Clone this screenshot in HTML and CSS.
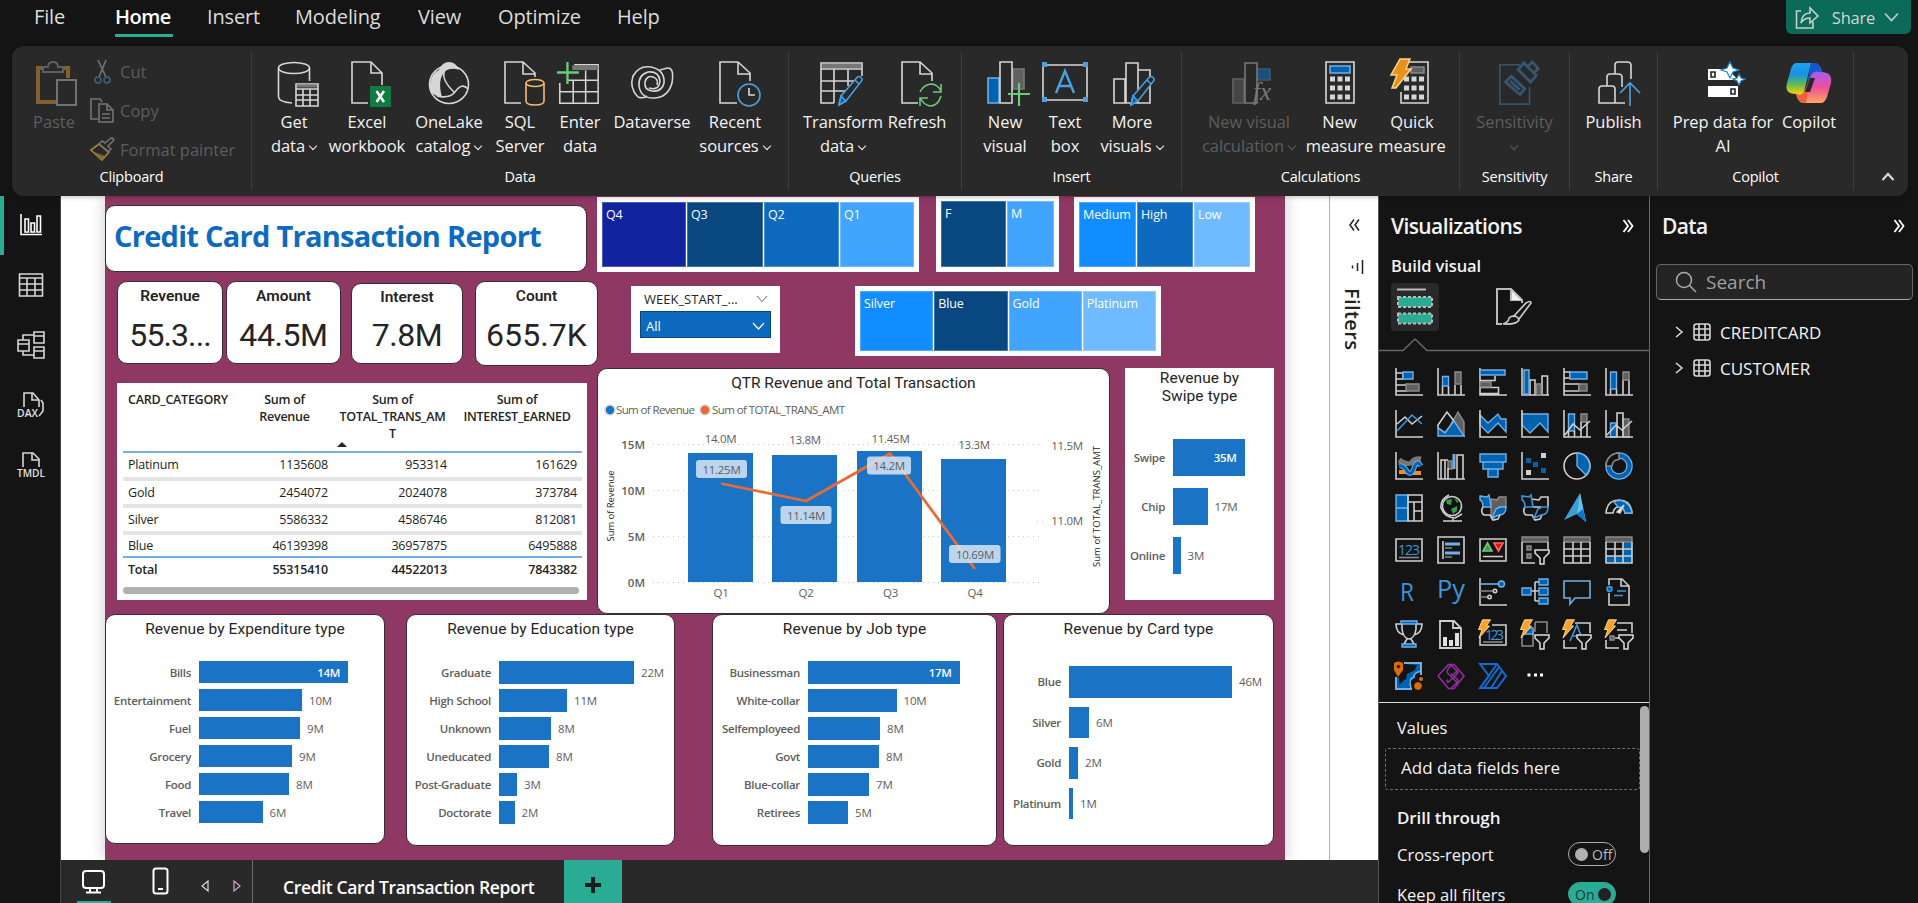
FILE: index.html
```html
<!DOCTYPE html>
<html lang="en">
<head>
<meta charset="utf-8">
<title>Credit Card Transaction Report</title>
<link rel="stylesheet" href="styles.css">
</head>
<body>
<svg class="defs" width="0" height="0">
  <defs>
    <symbol id="bolt" viewBox="0 0 14 20"><path d="M5 .8H13L9 7H12L1.500 19L4.500 10.500H1Z" fill="#f7a32b" stroke="#fbd58a" stroke-width="1"/></symbol>
    <symbol id="pencil" viewBox="0 0 26 32"><path d="M2 30L4 21L20 2.500Q22 .5 24 2.500T24.500 6L9 26Z" fill="#292929" stroke="#4ba0e1"/><path d="M2 30L4 21L9 26Z" fill="#0063b1" stroke="#4ba0e1"/><path d="M18 5L22 9" stroke="#4ba0e1"/></symbol>
    <symbol id="funnel" viewBox="0 0 16 16"><path d="M1 1H15V4L10 9V15H6V9L1 4Z" fill="#141414" stroke="#e0e0e0" stroke-width="1.500"/></symbol>
    <linearGradient id="cpA" x1="0" y1="0" x2="0" y2="1"><stop offset="0" stop-color="#1fa2f0"/><stop offset=".35" stop-color="#1592e6"/><stop offset=".65" stop-color="#5cb85c"/><stop offset="1" stop-color="#ffd400"/></linearGradient>
    <linearGradient id="cpB" x1="0" y1="0" x2="0" y2="1"><stop offset="0" stop-color="#a45cf0"/><stop offset=".5" stop-color="#ee4f9c"/><stop offset="1" stop-color="#ffa85c"/></linearGradient>
  </defs>
</svg>

<nav class="tabs">
  <span class="t-file">File</span><span class="t-home">Home</span><span class="t-insert">Insert</span><span class="t-model">Modeling</span><span class="t-view">View</span><span class="t-opt">Optimize</span><span class="t-help">Help</span>
  <button class="share"><svg width="24" height="26" viewBox="0 0 24 26"><path d="M6 7H1.500V24H18V18M6 19Q7 9 15 9V4L23 12L15 19V14Q9 14 6 19Z"/></svg><b>Share</b><svg width="15" height="10" viewBox="0 0 15 10"><path d="M1 1.500L7.500 8.500L14 1.500"/></svg></button>
</nav>

<section class="ribbon">
  <div class="group clipboard">
    <div class="clip">
      <div class="item off"><svg width="42" height="46" viewBox="0 0 42 46"><path d="M6 7H2V41H20M27 7H32V17" stroke="#80602f" stroke-width="4"/><path d="M7 11V6H12Q12 1 17 1T22 6H27V11Z" stroke="#5f5f5f" stroke-width="2"/><path d="M21 19H40V44H21Z" stroke="#717171" stroke-width="2"/></svg><span>Paste</span></div>
      <div class="clip-list">
        <div><svg width="25" height="25" viewBox="0 0 25 25"><path d="M8 1L16 18M16 1L9 18"/><circle cx="8" cy="21" r="3" stroke="#3f6078"/><circle cx="17" cy="21" r="3" stroke="#3f6078"/></svg>Cut</div>
        <div><svg width="25" height="25" viewBox="0 0 25 25"><path d="M8 21H1V1H10L12 4M9 24V6H17L23 12V24ZM17 6V12H23M12 16H20M12 20H20"/></svg>Copy</div>
        <div><svg width="25" height="25" viewBox="0 0 25 25"><path d="M1 13L9 7L19 15L12 23Z" stroke="#a3833f"/><path d="M4 15L15 19L12 23Z" fill="#8a672f" stroke="none"/><path d="M9 7L12 4L15 6L21 1Q25 1 23 4L18 9L21 12L18 15Z"/></svg>Format painter</div>
      </div>
    </div>
    <h4>Clipboard</h4>
  </div>
  <div class="group data">
    <div class="items">
      <div class="item"><svg class="nudge" width="42" height="46" viewBox="0 0 42 46"><ellipse cx="17" cy="7" rx="15.500" ry="5.500"/><path d="M1.500 7V36Q2 41 15 42M32.500 7V20"/><path d="M19 23H41V45H19Z"/><path d="M20 25H40" stroke="#777" stroke-width="3"/><path d="M19 28H41M19 34H41M19 39H41M26 28V45M33 28V45"/></svg><span>Get<br>data<i class="chev"></i></span></div>
      <div class="item"><svg class="nudge" width="42" height="46" viewBox="0 0 42 46"><path d="M18 42H2V1H21L32 12V24M21 1V12H32"/><path d="M20 25H41V46H20Z" fill="#107c41" stroke="none"/><path d="M26.500 30L34 41M34 30L26.500 41" stroke="#fff" stroke-width="2.500"/></svg><span>Excel<br>workbook</span></div>
      <div class="item"><svg width="42" height="46" viewBox="0 0 42 46"><ellipse cx="21" cy="23.500" rx="19.500" ry="19"/><path d="M11 9Q14 1 21 1T31 9Q24 6 17 10Q9 19 14 36Q-1 34 2 22Q4 12 11 9Z" fill="#d6d6d6" stroke="none"/><path d="M17 9Q12 18 27 32M9 35Q21 38 27 31Q34 21 40 28"/></svg><span>OneLake<br>catalog<i class="chev"></i></span></div>
      <div class="item"><svg class="nudge" width="42" height="46" viewBox="0 0 42 46"><path d="M18 42H2V1H20L32 12V16M20 1V13H32"/><ellipse cx="32" cy="22" rx="9" ry="3.500" stroke="#f5b971"/><path d="M23 22V40Q23 44 32 44T41 40V22" stroke="#f5b971"/></svg><span>SQL<br>Server</span></div>
      <div class="item"><svg class="grid-ic" width="46" height="48" viewBox="0 0 46 48"><path d="M19 4H44V44H4V23M4 32H44M12 20H44M18 20V44M31 10V44"/><path d="M17 7H44" stroke="#777" stroke-width="5"/><path d="M1 12H24M12 1V24" stroke="#6ccb7a" stroke-width="2.400"/></svg><span>Enter<br>data</span></div>
      <div class="item"><svg width="44" height="46" viewBox="0 0 44 46"><path d="M8 36Q-1 27 3 15Q9 4 21 6Q35 9 34 22Q32 31 22 30Q14 29 15 21Q17 14 23 16Q29 18 27 24M34 8Q45 3 42 22Q38 36 25 37Q11 38 9 25Q8 14 18 11Q29 10 30 20Q29 30 19 27M34 8Q31 8 29 10M8 36Q13 38 17 35"/></svg><span>Dataverse</span></div>
      <div class="item"><svg class="nudge" width="42" height="46" viewBox="0 0 42 46"><path d="M19 42H2V1H20L32 12V20M20 1V13H32"/><circle cx="31" cy="34" r="11" stroke="#4ba0e1"/><path d="M31 27V34H37"/></svg><span>Recent<br>sources<i class="chev"></i></span></div>
    </div>
    <h4>Data</h4>
  </div>
  <div class="group queries">
    <div class="items">
      <div class="item"><svg width="46" height="46" viewBox="0 0 46 46"><path d="M14 42H1V2H42V15M1 8H42M1 20H35M1 30H25M14 8V42M28 8V25"/><path d="M2 5H41" stroke="#777" stroke-width="4"/><use href="#pencil" x="14" y="14" width="32" height="32"/></svg><span>Transform<br>data<i class="chev"></i></span></div>
      <div class="item"><svg class="nudge" width="42" height="46" viewBox="0 0 42 46"><path d="M18 42H2V1H20L32 12V20M20 1V13H32"/><path d="M20 31Q24 23 32 23Q38 24 41 30M41 23V31H33M41 35Q38 45 30 45Q24 44 21 38M20 45V37H28" stroke="#6ccb7a"/></svg><span>Refresh</span></div>
    </div>
    <h4>Queries</h4>
  </div>
  <div class="group insert">
    <div class="items">
      <div class="item"><svg class="nudge" width="44" height="46" viewBox="0 0 44 46"><path d="M1 17H12V42H1Z" fill="#0063b1" stroke="#71afe5"/><path d="M26 8H37V28H26Z" fill="#606060" stroke="#777"/><path d="M13 1H25V42H13Z"/><path d="M21 33H43M32 22V45" stroke="#6ccb7a" stroke-width="2.200"/></svg><span>New<br>visual</span></div>
      <div class="item"><svg width="46" height="46" viewBox="0 0 46 46"><path d="M1 4H45V39H1Z"/><path d="M0 1H5V6H0ZM41 1H46V6H41ZM0 36H5V41H0ZM41 36H46V41H41Z" fill="#4ba0e1" stroke="none"/><path d="M14 32L23 10L32 32M17 25H29" stroke="#4ba0e1" stroke-width="2.400"/></svg><span>Text<br>box</span></div>
      <div class="item"><svg class="nudge" width="46" height="46" viewBox="0 0 46 46"><path d="M1 18H12V42H1ZM13 2H25V42H13ZM25 9H37V42H25"/><use href="#pencil" x="13" y="14" width="32" height="32"/></svg><span>More<br>visuals<i class="chev"></i></span></div>
    </div>
    <h4>Insert</h4>
  </div>
  <div class="group calc">
    <div class="items">
      <div class="item off"><svg class="nudge" width="44" height="46" viewBox="0 0 44 46"><path d="M2 18H13V42H2Z" fill="#454545" stroke="#626262"/><path d="M26 8H39V19H26Z" fill="#1d4e78" stroke="#365a78"/><path d="M14 2H26V42H14Z" stroke="#777" fill="#292929"/><text x="22" y="39" class="fx">fx</text></svg><span>New visual<br>calculation<i class="chev"></i></span></div>
      <div class="item"><svg width="42" height="46" viewBox="0 0 42 46"><path d="M7 1H35V42H7Z"/><path d="M11 5H31V12H11Z" fill="#0063b1" stroke="#71afe5"/><path d="M11 18H31M11 27H31M11 36H31" stroke-width="5" stroke-dasharray="5 2.500"/></svg><span>New<br>measure</span></div>
      <div class="item"><svg width="42" height="46" viewBox="0 0 42 46"><path d="M10 1H37V42H10V31"/><path d="M20 6H33V12H20Z" fill="#606060" stroke="#888"/><path d="M13 18H33M13 27H33M13 36H33" stroke-width="5" stroke-dasharray="5 2.500"/><path d="M9 -2H19L15 8H20L5 27H1L6 14H0Z" fill="#e8921c" stroke="#fbd58a" stroke-width="1.500"/></svg><span>Quick<br>measure</span></div>
    </div>
    <h4>Calculations</h4>
  </div>
  <div class="group sens">
    <div class="items">
      <div class="item off"><svg class="blue" width="42" height="46" viewBox="0 0 42 48"><path d="M22 4H1V45H32V27"/><path d="M26 2L39 15L33 22L20 9ZM30 6L35 1L41 8L37 12M7 22L13 16L27 29L22 35ZM12 21L22 30" stroke-width="3"/></svg><span>Sensitivity<br><i class="chev"></i></span></div>
    </div>
    <h4>Sensitivity</h4>
  </div>
  <div class="group shr">
    <div class="items">
      <div class="item"><svg width="42" height="46" viewBox="0 0 42 46"><path d="M27 42H1V28Q1 25 4 25H14Q17 25 17 28V42M9 25V16Q9 13 12 13H20Q24 13 24 16V26M17 13V4Q17 1 20 1H29Q33 1 33 4V18"/><path d="M32 45V23M22 32L32 22L42 32" stroke="#4ba0e1"/></svg><span>Publish</span></div>
    </div>
    <h4>Share</h4>
  </div>
  <div class="group copilot">
    <div class="items">
      <div class="item prep"><svg class="nudge" width="42" height="46" viewBox="0 0 42 46"><path d="M2 8H22L32 19H2ZM2 25H32V36H2Z" fill="#fff" stroke="none"/><path d="M5 11H9V16H5ZM25 28H29V33H25Z" fill="#fff" stroke="#222"/><path d="M24 1L27 7L33 9L27 11L24 17L21 11L15 9L21 7ZM33 13L35 17L39 18L35 20L33 24L31 20L27 18L31 17Z" fill="#fff" stroke="#1683d8" stroke-width="1.200"/></svg><span>Prep data for<br>AI</span></div>
      <div class="item"><svg width="46" height="46" viewBox="0 0 46 46"><path d="M10 2H29Q34 2 36 12H29L25 2L18 31Q16 36 10 33Q-2 33 1 22L5 8Q6 3 10 2Z" fill="url(#cpA)" stroke="none"/><path d="M36 42H18Q12 42 10 33Q17 36 19 29L25 14Q27 9 33 11Q47 10 45 22L41 36Q39 41 36 42Z" fill="url(#cpB)" stroke="none"/><path d="M25 2H30Q34 3 35 11Q28 9 25 14L21 23Z" fill="#1555d0" stroke="none"/><path d="M10 33Q16 36 19 30L24 17L20 42Q12 42 10 33Z" fill="#f0603e" stroke="none"/><path d="M24 17H29L24 31H19Z" fill="#292929" stroke="none"/></svg><span>Copilot</span></div>
    </div>
    <h4>Copilot</h4>
  </div>
  <svg class="collapse" width="14" height="10" viewBox="0 0 14 10"><path d="M1.500 8L7 2L12.500 8"/></svg>
</section>

<main>
  <aside class="side">
    <div class="active"><svg width="22" height="22" viewBox="0 0 22 22"><path d="M1 0V20.500H22M5 18V5H8.500V18ZM11 18V9H14.500V18ZM17 18V2H20.500V18Z" stroke="#fff"/></svg></div>
    <div><svg width="26" height="24" viewBox="0 0 26 24"><path d="M1.500 1H24.500V23H1.500ZM1.500 5H24.500M1.500 11H24.500M1.500 17H24.500M9 5V23M17 5V23"/></svg></div>
    <div><svg width="28" height="28" viewBox="0 0 28 28"><path d="M1 9H12V20H1ZM1 13H12M17 1H27V12H17ZM17 5H27M17 16H27V27H17ZM17 20H27M6 9V4H17M6 20V24H17"/></svg></div>
    <div><svg width="28" height="26" viewBox="0 0 28 26"><path d="M7 15V1H16L22 8V15M15 1V8H22M24 8L26 11V19L22 24"/><text x="0" y="25" class="ic" textLength="21" lengthAdjust="spacingAndGlyphs">DAX</text></svg></div>
    <div><svg width="28" height="26" viewBox="0 0 28 26"><path d="M6 15V1H16L22 7V15M15 1V8H22"/><text x="0" y="25" class="ic" textLength="28" lengthAdjust="spacingAndGlyphs">TMDL</text></svg></div>
  </aside>

  <div class="center">
    <div class="work">
      <div class="stage">
        <div class="report">
          <div class="upper">
            <div class="left">
              <div class="title card">Credit Card Transaction Report</div>
              <div class="kpis">
                <div class="kpi card k1"><h5>Revenue</h5><b>55.3...</b></div>
                <div class="kpi card k2"><h5>Amount</h5><b>44.5M</b></div>
                <div class="kpi card k3"><h5>Interest</h5><b>7.8M</b></div>
                <div class="kpi card k4"><h5>Count</h5><b>655.7K</b></div>
              </div>
              <div class="tablebox">
                <table>
                  <colgroup><col class="c1"><col class="c2"><col class="c3"><col class="c4"></colgroup>
                  <tr class="head"><th>CARD_CATEGORY</th><th>Sum of<br>Revenue</th><th class="sorted">Sum of<br>TOTAL_TRANS_AM<br>T</th><th>Sum of<br>INTEREST_EARNED</th></tr>
                  <tr><td>Platinum</td><td>1135608</td><td>953314</td><td>161629</td></tr>
                  <tr><td>Gold</td><td>2454072</td><td>2024078</td><td>373784</td></tr>
                  <tr><td>Silver</td><td>5586332</td><td>4586746</td><td>812081</td></tr>
                  <tr class="last"><td>Blue</td><td>46139398</td><td>36957875</td><td>6495888</td></tr>
                  <tr class="total"><td>Total</td><td>55315410</td><td>44522013</td><td>7843382</td></tr>
                </table>
                <div class="hscroll"></div>
              </div>
            </div>
            <div class="right">
              <div class="row1">
                <div class="slicer s1"><span class="navy">Q4</span><span class="deep">Q3</span><span class="mid">Q2</span><span class="sky">Q1</span></div>
                <div class="slicer s2"><span class="deep">F</span><span class="sky">M</span></div>
                <div class="slicer s3"><span class="azure">Medium</span><span class="mid">High</span><span class="pale">Low</span></div>
              </div>
              <div class="row2">
                <div class="week"><div class="wk-head">WEEK_START_...<svg width="12" height="8" viewBox="0 0 12 8"><path d="M1 1L6 6.500L11 1"/></svg></div><div class="drop">All<svg width="13" height="8" viewBox="0 0 13 8"><path d="M1 1L6.500 7L12 1"/></svg></div></div>
                <div class="slicer s4"><span class="azure">Silver</span><span class="deep">Blue</span><span class="sky">Gold</span><span class="pale">Platinum</span></div>
              </div>
              <div class="row3">
                <div class="card combo">
                  <h3>QTR Revenue and Total Transaction</h3>
                  <svg class="plot" width="511" height="214" viewBox="599 398 511 214">
                    <circle cx="611" cy="410" r="5" fill="#1a73c4"/><text x="617" y="414" textLength="79">Sum of Revenue</text>
                    <circle cx="706" cy="410" r="5" fill="#e66c37"/><text x="713" y="414" textLength="133">Sum of TOTAL_TRANS_AMT</text>
                    <path class="grid" d="M654 444.500H1044M654 490.500H1044M654 536.500H1044M654 582.500H1044M1038 521.500H1044"/>
                    <g class="bars"><rect x="689" y="453" width="65" height="129"/><rect x="773" y="455" width="65" height="127"/><rect x="858" y="451" width="65" height="131"/><rect x="942" y="459" width="65" height="123"/></g>
                    <path d="M722 483.500L807 501L891 453.500L976 569" fill="none" stroke="#e66c37" stroke-width="2.800" stroke-linejoin="round"/>
                    <g class="tags"><rect x="697" y="460" width="51" height="18" rx="3"/><rect x="781.500" y="506" width="51" height="18" rx="3"/><rect x="868" y="456.500" width="44" height="18" rx="3"/><rect x="950" y="545" width="51.500" height="18" rx="3"/></g>
                    <g class="strong"><text x="646" y="448.500">15M</text><text x="646" y="494.500">10M</text><text x="646" y="540.500">5M</text><text x="646" y="586.500">0M</text></g>
                    <g class="mid-text"><text x="721.500" y="443">14.0M</text><text x="806" y="443.500">13.8M</text><text x="891.500" y="442.500">11.45M</text><text x="975" y="448.500">13.3M</text><text x="722.500" y="473.500">11.25M</text><text x="807" y="519.500">11.14M</text><text x="890" y="469.500">14.2M</text><text x="976" y="558.500">10.69M</text><text x="1068" y="450">11.5M</text><text x="1068" y="525">11.0M</text><text x="722" y="597">Q1</text><text x="807" y="597">Q2</text><text x="891.500" y="597">Q3</text><text x="976" y="597">Q4</text></g>
                    <text class="axis" transform="translate(615 541.500) rotate(-90)" textLength="71">Sum of Revenue</text>
                    <text class="axis" transform="translate(1100.500 567) rotate(-90)" textLength="121">Sum of TOTAL_TRANS_AMT</text>
                  </svg>
                </div>
                <div class="swipe">
                  <h3>Revenue by<br>Swipe type</h3>
                  <div class="rows">
                    <div><label>Swipe</label><i style="width:71.500px"><em>35M</em></i></div>
                    <div><label>Chip</label><i style="width:34.500px"></i><u>17M</u></div>
                    <div><label>Online</label><i style="width:7.500px"></i><u>3M</u></div>
                  </div>
                </div>
              </div>
            </div>
          </div>
          <div class="lower">
            <div class="card bar b1"><h3>Revenue by Expenditure type</h3><div class="rows">
              <div><label>Bills</label><i style="width:149px"><em>14M</em></i></div>
              <div><label>Entertainment</label><i style="width:103px"></i><u>10M</u></div>
              <div><label>Fuel</label><i style="width:101px"></i><u>9M</u></div>
              <div><label>Grocery</label><i style="width:93px"></i><u>9M</u></div>
              <div><label>Food</label><i style="width:90px"></i><u>8M</u></div>
              <div><label>Travel</label><i style="width:63.500px"></i><u>6M</u></div></div></div>
            <div class="card bar b2"><h3>Revenue by Education type</h3><div class="rows">
              <div><label>Graduate</label><i style="width:135px"></i><u>22M</u></div>
              <div><label>High School</label><i style="width:68px"></i><u>11M</u></div>
              <div><label>Unknown</label><i style="width:52px"></i><u>8M</u></div>
              <div><label>Uneducated</label><i style="width:50px"></i><u>8M</u></div>
              <div><label>Post-Graduate</label><i style="width:18px"></i><u>3M</u></div>
              <div><label>Doctorate</label><i style="width:15.500px"></i><u>2M</u></div></div></div>
            <div class="card bar b3"><h3>Revenue by Job type</h3><div class="rows">
              <div><label>Businessman</label><i style="width:151.500px"><em>17M</em></i></div>
              <div><label>White-collar</label><i style="width:88.500px"></i><u>10M</u></div>
              <div><label>Selfemployeed</label><i style="width:72px"></i><u>8M</u></div>
              <div><label>Govt</label><i style="width:71px"></i><u>8M</u></div>
              <div><label>Blue-collar</label><i style="width:61px"></i><u>7M</u></div>
              <div><label>Retirees</label><i style="width:40px"></i><u>5M</u></div></div></div>
            <div class="card bar b4"><h3>Revenue by Card type</h3><div class="rows">
              <div><label>Blue</label><i style="width:163px"></i><u>46M</u></div>
              <div><label>Silver</label><i style="width:20px"></i><u>6M</u></div>
              <div><label>Gold</label><i style="width:9px"></i><u>2M</u></div>
              <div><label>Platinum</label><i style="width:4px"></i><u>1M</u></div></div></div>
          </div>
        </div>
      </div>
      <div class="filters">
        <svg width="11" height="14" viewBox="0 0 11 14"><path d="M5 1.500L1 7L5 12.500M10 1.500L6 7L10 12.500" stroke="#222" stroke-width="1.500"/></svg>
        <svg class="filt" width="13" height="14" viewBox="0 0 13 14"><path d="M1.500 5.500V8.500M6.500 3V11M11.500 0V14" stroke="#222" stroke-width="1.500"/></svg>
        <span>Filters</span>
      </div>
    </div>
    <footer>
      <div class="dev on"><svg width="26" height="26" viewBox="0 0 26 26"><rect x="2" y="2" width="21" height="17" rx="3"/><path d="M9 19V23M16 19V23M5 23.500H20"/></svg></div>
      <div class="dev ph"><svg width="18" height="28" viewBox="0 0 18 28"><rect x="1.500" y="1.500" width="14" height="25" rx="2.500"/><path d="M6 22H11"/></svg></div>
      <div class="nav"><svg width="8" height="12" viewBox="0 0 8 12"><path d="M7 1V11L1 6Z" stroke="#ddd" stroke-width="1.200"/></svg><svg width="8" height="12" viewBox="0 0 8 12"><path d="M1 1V11L7 6Z" stroke="#d6a0d6" stroke-width="1.200"/></svg></div>
      <div class="pg">Credit Card Transaction Report</div>
      <div class="plus"><svg width="18" height="18" viewBox="0 0 18 18"><path d="M9 1V17M1 9H17" stroke="#1c1c1c" stroke-width="4"/></svg></div>
    </footer>
  </div>

  <section class="viz">
    <div class="pane-head"><h2>Visualizations</h2><svg width="12" height="14" viewBox="0 0 12 14"><path d="M1.500 1L6 7L1.500 13M6 1L10.500 7L6 13"/></svg></div>
    <h3>Build visual</h3>
    <div class="modes">
      <div class="mode"><svg width="36" height="38" viewBox="0 0 36 38"><path d="M0 1.500H29" stroke="#bbb" stroke-width="2"/><path d="M1 9H35V19H1ZM1 25.500H35V35.500H1Z" fill="#2aac94" stroke="#bbb" stroke-width="2" stroke-dasharray="3 2"/></svg></div>
      <svg width="36" height="38" viewBox="0 0 36 38"><path d="M6 36H1V1H15L26 12V15M15 1V12H26" stroke="#bbb" stroke-width="2"/><path d="M16 3L25 12H16Z" fill="#eee" stroke="none"/><path d="M17 29L30 15Q35 12 35 15L23 31M17 28Q22 28 23 32Q20 37 7 36Q13 34 13 30Q15 28 17 28Z" stroke="#ccc"/></svg>
    </div>
    <svg class="caret" width="270" height="14" viewBox="0 0 270 14"><path d="M0 12.500H24L36 1L48 12.500H270" stroke="#666"/></svg>
    <div class="icons">
      <svg><path d="M1 0V27H28M1 5H8V11H1M1 17H12V23H1"/><path class="b" d="M8 4H18V11H8Z"/><path class="g" d="M11 16H24V23H11Z"/></svg>
      <svg><path d="M1 0V27H28M5.500 18V27M11.500 18V27M18 17V27M24 17V27"/><path class="b" d="M5.500 8.500H11.500V18H5.500Z"/><path class="g" d="M18 4H24V16H18Z"/></svg>
      <svg><path d="M1 0V27H28M1 12.500H16V8M1 19.500H19.500V25.500H1"/><path class="b" d="M1 2H26V7H1Z"/><path class="g" d="M1 14H12V19H1Z"/></svg>
      <svg><path d="M1 0V27H28M9 27V12H14V27M21 27V8H26.500V27"/><path class="b" d="M3 2H8V26H3Z"/><path class="g" d="M15.500 16H20V27H15.500Z"/></svg>
      <svg><path d="M1 0V27H28M1 4H7V10H1M1 16H16V23H1"/><path class="b" d="M7 4H24V11H7Z"/><path class="g" d="M16 16H24V23H16Z"/></svg>
      <svg><path d="M1 0V27H28M5.500 21V27M11.500 21V27M18 12V27M24 12V27"/><path class="b" d="M5.500 4H11.500V21H5.500Z"/><path class="g" d="M18 4H24V12H18Z"/></svg>

      <svg><path d="M1 0V27H28M2 14L10 7L17 14L27 6"/><path d="M2 21L17 5L27 14" stroke="#3a96dd"/></svg>
      <svg><path class="g" d="M14 14L21 2L27 12V26Z"/><path d="M1 18V15L10 2L17 11L8 23Z"/><path class="b" d="M1 26V18L8 23L17 11L27 26Z"/></svg>
      <svg><path class="b" d="M1 5L9 13L19 4L22 9H27V22L19 13L9 23L1 15Z"/><path d="M1 0V27H28"/></svg>
      <svg><path class="b" d="M1 4H27V22L19 13L9 23L1 15Z"/><path d="M1 0V27H28"/></svg>
      <svg><path class="b" d="M5.500 4H11.500V21H5.500Z"/><path class="g" d="M18 4H24V12H18Z"/><path d="M1 0V27H28M5.500 21V27M11.500 21V27M18 12V27M24 12V27M2 25L10 14L17 20L27 11"/></svg>
      <svg><path class="b" d="M5.500 13H11.500V27H5.500Z"/><path class="g" d="M18 9H24V27H18Z"/><path d="M1 0V27H28M12 27V3H18V27M2 25L11 15L17 20L27 11"/></svg>

      <svg><path d="M4 8Q14 14 17 10T26 7" stroke="#777" stroke-width="5"/><path d="M4 20H11M17 21H26" stroke="#f58a1f" stroke-width="4"/><path d="M4 14Q8 13 12 19T19 16T26 14" stroke="#71afe5" stroke-width="5"/><path d="M4 14Q8 13 12 19T19 16T26 14" stroke="#0063b1" stroke-width="3"/><path d="M1 0V27H28"/></svg>
      <svg><path class="g" d="M11 9H15V17H11Z"/><path d="M1 0V27H28M4 27V8H11M8 8V27M11 16V27M20 27V3H26V27M20 3V16"/><path d="M17 2V17" stroke="#71afe5" stroke-width="3"/></svg>
      <svg><path class="b" d="M1 2H27V10H1ZM4 10H24V17H4ZM9 17H19V25H9Z"/></svg>
      <svg><path d="M1 0V27H28"/><path d="M5 6H10V11H5ZM12 10H17V15H12ZM20 16H25V21H20Z" fill="#0063b1" stroke="none"/><path d="M20 1H25V6H20ZM5 18H10V23H5Z" fill="#d0d0d0" stroke="none"/></svg>
      <svg><circle cx="14" cy="14" r="13"/><path class="b" d="M14 1A13 13 0 0 1 23 23L14 14Z"/></svg>
      <svg><circle cx="14" cy="14" r="10.500" stroke="#71afe5" stroke-width="6.500"/><circle cx="14" cy="14" r="10.500" stroke="#0063b1" stroke-width="4"/><path d="M1 14A13 13 0 0 1 14 1V7.500A6.500 6.500 0 0 0 7 14Z" fill="#141414" stroke="#888"/></svg>

      <svg><path class="b" d="M1 1H13V27H1ZM1 14H13"/><path d="M13 1H27V27H13ZM13 8H27M19 8V27M19 17H27"/></svg>
      <svg><circle cx="15" cy="12" r="9.500" fill="#111"/><path d="M9 6L15 5L14 11L10 10ZM17 4L22 7L20 9ZM14 15L20 12L20 17L16 20Z" fill="#2f9e44" stroke="none"/><path d="M12 1Q3 5 4 14Q8 24 18 24L25 20M16 24V27M6 27H25"/></svg>
      <svg><path class="g" d="M12 5L18 6L20 3H27V13H20L15 24L12 22V14H12Z"/><path class="b" d="M1 2L8 3L10 1L12 13H4Q4 7 1 6ZM17 15L21 13H27Q27 21 20 21L13 24Z"/><path d="M4 13Q1 18 5 21L11 21L14 26L19 25L21 21"/></svg>
      <svg><path d="M10 5L18 6L20 3H27V13M4 13Q1 18 5 21L11 21L14 26L19 25L21 21M12 13H20"/><path d="M1 2L8 3L10 1L12 13H4Q4 7 1 6ZM17 15L21 13H27Q27 21 20 21L13 24Z" stroke="#3a96dd"/></svg>
      <svg><path d="M17 -1L23 28L14 20L1 26Z" fill="#3b9fd0" stroke="none"/><path d="M17 -1L23 28L14 20Z" fill="#66bfe6" stroke="none"/><path d="M14 20L20 15L23 28Z" fill="#0078d4" stroke="none"/></svg>
      <svg><path d="M1 19Q2 6 14 6Q26 6 27 19H20Q19 13 14 13Q9 13 8 19Z"/><path class="b" d="M9 8Q14 5 20 8Q26 12 27 19H20Q19 13 13 13Z"/><path d="M12 18L19 11L15 19Z" fill="#fff"/></svg>

      <svg><path d="M1 3H27V25H1Z"/><text x="3" y="19" class="num" textLength="22">123</text><path d="M4 21.500H24" stroke="#888"/></svg>
      <svg><path d="M1 1H27V27H1ZM6 5V23"/><path d="M8 8H23M8 17H23" stroke="#71afe5" stroke-width="3"/><path d="M8 12H15M8 21H15" stroke="#888"/></svg>
      <svg><path d="M1 3H27V25H1ZM4 20.500H24"/><path d="M4 15L8.500 7L13 15Z" fill="#2f9e44" stroke="#6ccb7a"/><path d="M15 7H24L19.500 15Z" fill="#d11" stroke="#f66"/></svg>
      <svg><path class="g" d="M1 1H27V6H1Z"/><path d="M14 27H1V6M27 6V13"/><path class="g" d="M6 10H10V14H6ZM6 18H10V22H6Z"/><use href="#funnel" x="13" y="13" width="16" height="16"/></svg>
      <svg><path class="g" d="M1 1H27V6H1Z"/><path d="M1 6V27H27V6M1 13H27M1 20H27M10 6V27M18 6V27"/></svg>
      <svg><path d="M18 7H27V27H1V20H18Z" fill="#0063b1" stroke="none"/><path class="g" d="M1 1H27V6H1Z"/><path d="M1 6V27H27V6M1 13H27M1 20H27M10 6V27M18 6V27"/></svg>

      <svg><text x="5" y="23" class="let" textLength="14" lengthAdjust="spacingAndGlyphs">R</text></svg>
      <svg><text x="0" y="20" class="let" textLength="28" lengthAdjust="spacingAndGlyphs">Py</text></svg>
      <svg><path d="M1 0V27H28"/><path d="M1 6H19" stroke="#71afe5"/><circle class="b" cx="22.500" cy="6" r="3"/><path d="M1 13H14M1 19H8" stroke="#888"/><circle cx="16" cy="13" r="1.700"/><circle cx="10.500" cy="19" r="1.700"/></svg>
      <svg><path d="M10 13H18M14 4V23M14 4H18M14 23H18"/><path class="b" d="M1 10H10V17H1ZM18 1H27V7H18ZM18 10H27V17H18ZM18 20H27V26H18Z"/></svg>
      <svg><path d="M1 3H27V20H12L7 26V20H1Z" stroke="#71afe5"/></svg>
      <svg><path d="M4 7V1H17L24 8V27H4V15M16 1V8H24"/><circle cx="4.500" cy="11" r="2.500" fill="#0063b1" stroke="#3a96dd"/><path d="M12 13H21M9 17.500H18" stroke="#3a96dd" stroke-width="1.500"/></svg>

      <svg><path d="M7 2H21V9Q20 18 14 19Q8 18 7 9ZM7 4H1Q1 13 9 15M21 4H27Q27 13 19 15M12 19L9 24M16 19L19 24"/><path class="b" d="M6 1H22V4H6ZM7 24H21V27H7Z"/></svg>
      <svg><path d="M3 1H17L24 8V28H3ZM16 1V8H24" stroke-width="1.800"/><path d="M6 17H10V26H6ZM12 20H16V26H12ZM18 13H22V26H18Z" fill="#e0e0e0" stroke="none"/></svg>
      <svg><path d="M13 5H27V25H1V17"/><text x="6" y="20" class="num" textLength="19">123</text><path d="M4 22H24" stroke="#888"/><use href="#bolt" x="-2" y="-1" width="15" height="20"/></svg>
      <svg><path d="M14 2H26V13M14 2V11H12V26H1V17" stroke="#888"/><path class="b" d="M7 8H12V14H4Z"/><use href="#bolt" x="-2" y="-1" width="15" height="20"/><use href="#funnel" x="13" y="14" width="16" height="16"/></svg>
      <svg><path d="M12 3H27V13M1 20V28H14"/><path d="M7 21L14 5L18 16M10 16H15" stroke="#3a96dd"/><use href="#bolt" x="-2" y="-1" width="15" height="20"/><use href="#funnel" x="13" y="14" width="16" height="16"/></svg>
      <svg><path d="M12 3H27V13M1 20V28H14M12 10H22M10 18H14"/><path class="g" d="M5 16H9V20H5Z"/><use href="#bolt" x="-2" y="-1" width="15" height="20"/><use href="#funnel" x="13" y="14" width="16" height="16"/></svg>

      <svg><path d="M10 2H26V10L20 12V16L14 19L15 26H2V16L6 14L11 18L12 12L20 8L22 3Z" fill="#0063b1" stroke="none"/><path d="M10 3H21L19 8L12 11L10 17L4 23V15Z" fill="#141414" stroke="none"/><path d="M26 13V1H9M1 15V27H17" stroke="#71afe5" stroke-width="2"/><path d="M26 9Q18 11 19 15Q13 17 16 26" stroke="#71afe5"/><path d="M3 15L-1 8V1Q3 -2 8 1V8Z" fill="#e06c00" stroke="none"/><circle cx="3.500" cy="4.500" r="1.800" fill="#141414" stroke="none"/><circle cx="23" cy="24" r="3.800" fill="#e06c00" stroke="none"/><circle cx="26" cy="17" r="2" fill="#e06c00" stroke="none"/></svg>
      <svg class="purple"><path d="M1 14L11 3Q12.500 1.500 14 3L20 9Q21.500 10.500 20 12L11 20.500Q9.500 19 10.500 17.500M14 26Q12.500 27.500 11 26L1 14M14 3Q16 1.500 17.500 3L27 14L17.500 26Q16 27.500 14 26M14 3L10.500 8Q9.500 10 11 11.500L20 20.500M20 9L14 14.500M14 26L20 20.500Q21.500 18.500 20 17L14 11.500"/></svg>
      <svg class="flow"><path d="M1 2H18L27 14L18 26H1L10 14ZM5 26L20 5M12 26L23 9M1 26L18 2"/></svg>
      <svg><path d="M6.500 11.500h3v3h-3zM13 11.500h3v3h-3zM19 11.500h3v3h-3z" fill="#fff" stroke="none"/></svg>
    </div>
    <div class="wells">
      <div class="well">
        <p>Values</p>
        <div class="dropzone">Add data fields here</div>
        <h4>Drill through</h4>
        <div class="opt"><span>Cross-report</span><b class="tog"><i></i>Off</b></div>
        <div class="opt"><span>Keep all filters</span><b class="tog yes">On<i></i></b></div>
      </div>
      <div class="vscroll"></div>
    </div>
  </section>

  <section class="dpane">
    <div class="pane-head"><h2>Data</h2><svg width="12" height="14" viewBox="0 0 12 14"><path d="M1.500 1L6 7L1.500 13M6 1L10.500 7L6 13"/></svg></div>
    <div class="search"><svg width="22" height="22" viewBox="0 0 22 22"><circle cx="9" cy="9" r="7.500"/><path d="M14.500 14.500L21 21"/></svg>Search</div>
    <div class="node"><svg width="8" height="12" viewBox="0 0 8 12"><path d="M1 1L7 6L1 11"/></svg><svg width="18" height="18" viewBox="0 0 18 18"><rect x="1" y="1" width="16" height="16" rx="2.500"/><path d="M6 1V17M12 1V17M1 6H17M1 12H17"/></svg><span>CREDITCARD</span></div>
    <div class="node"><svg width="8" height="12" viewBox="0 0 8 12"><path d="M1 1L7 6L1 11"/></svg><svg width="18" height="18" viewBox="0 0 18 18"><rect x="1" y="1" width="16" height="16" rx="2.500"/><path d="M6 1V17M12 1V17M1 6H17M1 12H17"/></svg><span>CUSTOMER</span></div>
  </section>
</main>
</body>
</html>
```
FILE: styles.css
```css
* { box-sizing: border-box; }
body { margin: 0; width: 1918px; height: 903px; overflow: hidden; background: #141414; color: #f3f3f3; font-family: "Open Sans", "Noto Sans", sans-serif; display: flex; flex-direction: column; }
h2, h3, h4, h5, p { margin: 0; }
i, em { font-style: normal; }
svg { fill: none; stroke: #d6d6d6; stroke-width: 1.6; flex: none; display: block; overflow: visible; }
svg text { stroke: none; }
.defs { position: absolute; }

/* menu tabs */
.tabs { height: 46px; flex: none; display: flex; padding-left: 34px; font-size: 20px; line-height: 34px; letter-spacing: -.15px; color: #dcdcdc; }
.tabs span { height: 37px; flex: none; white-space: nowrap; }
.t-file { width: 81px; }
.tabs .t-home { width: 58px; margin-right: 34px; font-weight: 600; color: #fff; border-bottom: 3px solid #2aac94; letter-spacing: -.5px; }
.t-insert { width: 88px; }
.t-model { width: 123px; }
.t-view { width: 80px; }
.t-opt { width: 119px; }
.share { margin: 0 7px 0 auto; width: 125px; height: 34px; padding: 0 12px 0 9px; border: 0; border-radius: 0 0 6px 6px; background: #0c6a58; color: #cfd8d5; display: flex; align-items: center; justify-content: space-between; font: 16.500px "Open Sans", sans-serif; }
.share b { font-weight: 400; margin-left: 4px; letter-spacing: -.2px; }
.share svg { stroke: #c6cfcc; }

/* ribbon */
.ribbon { height: 150px; flex: none; margin: 0 10px 0 12px; background: #292929; border-radius: 12px; display: flex; padding-top: 6px; position: relative; z-index: 2; box-shadow: 0 1px 5px rgba(0,0,0,.25); }
.group { height: 138px; flex: none; border-right: 1px solid #3d3d3d; display: flex; flex-direction: column; justify-content: space-between; }
.group h4 { text-align: center; font-size: 14.500px; font-weight: 400; line-height: 20px; height: 23px; color: #fff; letter-spacing: -.2px; }
.items { display: grid; }
.item { display: flex; flex-direction: column; align-items: center; padding-top: 9px; min-width: 0; }
.item svg { height: 46px; }
.item .nudge { margin-left: 7px; }
.item .grid-ic { margin-left: -5px; }
.item span { margin-top: 3px; font-size: 16.500px; line-height: 24px; text-align: center; white-space: nowrap; letter-spacing: -.05px; }
.off { color: #5d5d5d; }
.off svg { stroke: #5d5d5d; }
.chev { display: inline-block; width: 6px; height: 6px; margin: 0 1px 3px 5px; border: solid currentColor; border-width: 0 1.500px 1.500px 0; transform: rotate(45deg); }
.clipboard { width: 240px; }
.clip { display: flex; padding-left: 21px; height: 112px; }
.clip .item { width: 42px; }
.clip .item svg { margin-left: 6px; }
.clip-list { margin-left: 15px; color: #5d5d5d; font-size: 16.500px; }
.clip-list div { display: flex; align-items: center; gap: 5px; height: 39px; white-space: nowrap; }
.clip-list svg { stroke: #747474; }
.data { width: 537px; }
.data .items { grid-template-columns: 74px 72px 92px 50px 70px 74px 92px; padding-left: 5px; }
.queries { width: 173px; }
.queries .items { grid-template-columns: 80px 68px; padding-left: 14px; }
.insert { width: 220px; }
.insert .items { grid-template-columns: 58px 62px 72px; padding-left: 14px; }
.calc { width: 278px; }
.calc .items { grid-template-columns: 104px 77px 68px; padding-left: 15px; }
.sens { width: 110px; }
.sens .items, .shr .items { grid-template-columns: 1fr; }
.sens .blue { stroke: #35566e; margin-left: 8px; }
.sens .chev { margin-left: 0; }
.shr { width: 88px; }
.shr svg { margin-left: 10px; }
.copilot { width: 196px; }
.copilot .items { grid-template-columns: 100px 72px; padding-left: 15px; }
.fx { font: italic 25px "Liberation Serif", serif; fill: #777; }
.collapse { margin: 120px 0 0 27px; stroke-width: 2.200; }

main { flex: 1; min-height: 0; display: flex; }

/* view switcher */
.side { width: 61px; border-right: 1px solid #444; flex: none; }
.side div { height: 60px; display: grid; place-items: center; padding-left: 2px; }
.side .active { border-left: 4px solid #2aac94; padding: 0 2px 2px 0; height: 59px; }
.ic { font: 11px "Open Sans"; fill: #e0e0e0; font-weight: 600; }

.center { width: 1317px; flex: none; display: flex; flex-direction: column; }
.work { height: 664px; display: flex; }
.stage { width: 1269px; background: #fff; border-right: 1px solid #b0b0b0; padding-left: 44px; overflow: hidden; flex: none; }
.report { width: 1180px; height: 664px; background: #8e3863; box-shadow: 0 0 14px rgba(0,0,0,.22); color: #252423; }
.upper { display: flex; height: 418px; }
.left { width: 492px; flex: none; }
.card { background: #fff; border: 1px solid #3b2c38; border-radius: 10px; }
.title { margin-top: 9px; width: 482px; height: 67px; padding-left: 8px; font-size: 29px; font-weight: 700; line-height: 59px; color: #0d6abf; letter-spacing: -.73px; white-space: nowrap; }
.kpis { display: flex; align-items: flex-start; height: 84px; margin: 9px 0 0 12px; }
.kpi { height: 83px; flex: none; text-align: center; font-family: Roboto, sans-serif; }
.kpi h5 { font-size: 15.500px; font-weight: 600; line-height: 20px; margin-top: 4px; }
.kpi b { display: block; font-weight: 400; font-size: 32px; line-height: 40px; margin-top: 9px; white-space: nowrap; letter-spacing: -.4px; }
.k1 { width: 106px; margin-right: 3px; }
.k1 b { letter-spacing: -.9px; }
.k2 { width: 115px; margin-right: 10px; }
.k3 { width: 112px; height: 81px; margin: 2px 12px 0 0; }
.k3 h5 { margin-top: 3px; }
.k3 b { margin-top: 8px; }
.k4 { width: 123px; height: 85px; }
.k4 b { letter-spacing: .1px; }
.tablebox { width: 470px; height: 217px; margin: 18px 0 0 12px; background: #fff; padding: 8px 5px 0 6px; }
table { width: 459px; table-layout: fixed; border-collapse: collapse; font-size: 12.500px; }
.c1 { width: 105px; } .c2 { width: 105px; } .c3 { width: 119px; } .c4 { width: 130px; }
th, td { padding: 0 5px 1px; font-weight: 400; white-space: nowrap; line-height: 17px; text-align: right; letter-spacing: -.2px; }
td:first-child, th:first-child { text-align: left; }
.head th { height: 60px; vertical-align: top; text-align: center; font-weight: 600; padding: 0; border-bottom: 2px solid #71afe5; letter-spacing: -.25px; }
.head th:first-child { text-align: left; padding-left: 5px; }
.head th:nth-child(2) { padding-left: 8px; }
.sorted::after { content: ""; display: block; width: 0; margin: 0 0 4px 4px; border: 5px solid transparent; border-top: 0; border-bottom: 5px solid #252423; }
td { height: 27px; border-bottom: 4px solid #e4e4e4; }
.last td { border-bottom: 2px solid #71afe5; height: 24px; }
.total td { border: 0; height: 25px; font-weight: 600; }
.hscroll { height: 7px; width: 456px; border-radius: 4px; background: #b0b0b0; margin-top: 5px; }

.right { flex: 1; }
.row1 { display: flex; height: 76px; align-items: flex-start; }
.slicer { background: #fff; display: grid; gap: 1px; padding: 5px; flex: none; color: #fff; font-size: 12.500px; line-height: 17px; letter-spacing: -.1px; }
.slicer span { padding: 4px 0 0 4px; box-shadow: inset 0 0 0 1px rgba(255,255,255,.25); }
.s1 { width: 322px; height: 75px; margin-top: 1px; grid-template-columns: 84px 76px 75px 1fr; }
.s2 { width: 123px; height: 76px; margin-left: 17px; grid-template-columns: 65px 1fr; }
.s3 { width: 181px; height: 75px; margin: 1px 0 0 15px; grid-template-columns: 57px 56px 1fr; }
.s4 { width: 306px; height: 70px; margin-left: 75px; grid-template-columns: repeat(4, 1fr); }
.navy { background: #12239e; } .deep { background: #094780; } .mid { background: #0d6abf; } .sky { background: #41a4ff; } .azure { background: #118dff; } .pale { background: #70bbff; }
.row2 { display: flex; margin-top: 14px; height: 70px; align-items: flex-start; }
.week { margin-left: 34px; width: 149px; height: 67px; background: #fff; padding: 3px 9px 0; }
.wk-head { height: 22px; display: flex; align-items: center; justify-content: space-between; padding: 0 3px 3px 4px; font-size: 13px; }
.wk-head svg { stroke: #666; stroke-width: 1; }
.drop { height: 27px; width: 131px; background: #0d6abf; border: 1px solid #094780; color: #fff; display: flex; align-items: center; justify-content: space-between; padding: 2px 5px 0; font-size: 13px; }
.drop svg { stroke: #fff; stroke-width: 1.200; }
.row3 { display: flex; margin-top: 12px; }
.card h3, .swipe h3 { font: 400 15.500px/18px Roboto, sans-serif; text-align: center; letter-spacing: .1px; color: #252423; white-space: nowrap; }
.combo { width: 513px; height: 246px; }
.combo h3 { margin-top: 5px; height: 24px; letter-spacing: 0; }
.plot { font: 11.500px "Open Sans"; }
.plot text { fill: #605e5c; }
.plot .strong text { font-weight: 600; text-anchor: end; }
.plot .mid-text text { text-anchor: middle; letter-spacing: -.3px; }
.plot .axis { font-size: 9.500px; fill: #252423; }
.grid { stroke: #c8c8c8; stroke-width: 1; stroke-dasharray: 1 4; }
.bars { fill: #1a73c4; stroke: none; }
.tags { fill: #dbe8f6; fill-opacity: .84; stroke: none; }
.swipe { margin-left: 15px; width: 149px; height: 232px; background: #fff; padding-top: 1px; }

/* horizontal bar charts */
.rows { display: grid; font-size: 11.500px; color: #605e5c; }
.rows div { display: flex; align-items: center; }
.rows label { flex: none; text-align: right; padding-right: 8px; font-weight: 600; letter-spacing: -.3px; white-space: nowrap; }
.rows i { background: #1a73c4; align-self: stretch; flex: none; text-align: right; display: flex; align-items: center; justify-content: flex-end; }
.rows em { color: #fff; font-weight: 600; padding-right: 8px; letter-spacing: -.3px; }
.rows u { text-decoration: none; padding-left: 7px; letter-spacing: -.2px; }
.swipe .rows { margin-top: 34px; grid-auto-rows: 37px; row-gap: 12px; }
.swipe label { width: 48px; }
.lower { display: flex; align-items: flex-start; }
.bar { height: 232px; flex: none; }
.bar h3 { margin-top: 5px; height: 19px; }
.bar .rows { margin-top: 22px; grid-auto-rows: 22.500px; row-gap: 5.600px; }
.b1 { width: 280px; height: 230px; } .b1 label { width: 93px; }
.b1 .rows { grid-auto-rows: 22px; row-gap: 6px; }
.b2 { width: 269px; margin-left: 21px; } .b2 label { width: 92px; }
.b3 { width: 285px; margin-left: 37px; } .b3 label { width: 95px; }
.b4 { width: 271px; margin-left: 6px; } .b4 label { width: 65px; }
.bar.b4 .rows { margin-top: 27px; grid-auto-rows: 31.500px; row-gap: 9px; }

.filters { width: 48px; background: #fff; color: #222; display: flex; flex-direction: column; align-items: center; padding-top: 22px; }
.filters .filt { margin: 28px 0 0 6px; }
.filters span { writing-mode: vertical-rl; margin-top: 14px; margin-right: 3px; font-size: 20px; font-weight: 600; letter-spacing: .4px; }

footer { flex: 1; background: #292929; display: flex; font-size: 17.500px; font-weight: 600; color: #fff; }
footer svg { stroke: #fff; stroke-width: 2; }
.dev { padding: 9px 3px 0 4px; margin-left: 16px; width: 34px; }
.on { border-bottom: 2px solid #2aac94; }
.ph { margin-left: 37px; padding-top: 7px; }
.nav { display: flex; gap: 24px; padding-top: 20px; margin-left: 19px; width: 51px; }
.pg { width: 312px; border-left: 1px solid #6a6a6a; padding: 15px 0 0 30px; white-space: nowrap; line-height: 25px; letter-spacing: -.35px; }
.plus { width: 58px; background: #2aac94; display: grid; place-items: center; padding-top: 6px; }

/* right panes */
.viz { width: 272px; flex: none; border-left: 1px solid #555; border-right: 1px solid #666; display: flex; flex-direction: column; overflow: hidden; }
.pane-head { display: flex; justify-content: space-between; align-items: center; height: 30px; margin: 15px 15px 0 12px; }
h2 { font-size: 21px; font-weight: 600; letter-spacing: -.6px; }
.pane-head svg { stroke: #fff; stroke-width: 1.800; }
.viz h3 { font-size: 16.500px; font-weight: 600; line-height: 24px; margin: 13px 0 0 12px; letter-spacing: 0; letter-spacing: -.1px; }
.modes { display: flex; gap: 57px; margin: 5px 0 0 12px; align-items: center; }
.mode { width: 48px; height: 48px; background: #292929; border-radius: 3px; display: grid; place-items: center; }
.caret { margin-top: 7px; }
.icons { display: grid; grid-template-columns: repeat(6, 28px); grid-auto-rows: 28px; gap: 14px; margin: 16px 0 0 16px; height: 334px; flex: none; }
.icons svg { width: 28px; height: 28px; stroke: #cfcfcf; }
.icons .b { fill: #0063b1; stroke: #71afe5; stroke-width: 1.400; }
.icons .g { fill: #5f5f5f; stroke: #8c8c8c; stroke-width: 1.400; }
.icons .purple { stroke: #8f2f9c; }
.icons .flow { stroke: #0f6cd6; stroke-width: 2; }
.num { font: 14px "Open Sans"; fill: #3a96dd; }
.let { font: 25px "Open Sans"; fill: #3a96dd; }
.wells { border-top: 1px solid #ddd; display: flex; justify-content: space-between; font-size: 17px; flex: 1; min-height: 0; }
.well { width: 261px; padding: 14px 0 0 6px; flex: none; }
.well p { line-height: 22px; padding-left: 12px; font-size: 16.500px; }
.dropzone { margin-top: 9px; height: 42px; border: 1px dashed #6e6e6e; border-radius: 3px; padding-left: 15px; line-height: 38px; }
.well h4 { font-size: 17px; font-weight: 600; line-height: 24px; margin: 16px 0 0 12px; letter-spacing: -.1px; }
.opt { display: flex; justify-content: space-between; align-items: center; padding: 0 24px 0 12px; height: 40px; font-size: 16.500px; }
.well h4 + .opt { margin-top: 4px; }
.tog { width: 48px; height: 24px; border: 1px solid #adadad; border-radius: 12px; color: #bbb; font-weight: 400; font-size: 14px; display: flex; align-items: center; gap: 4px; padding-left: 6px; }
.tog i { width: 13px; height: 13px; border-radius: 50%; background: #b0b0b0; }
.yes { background: #2aac94; border-color: #2aac94; color: #1c3b36; }
.yes i { background: #222; }
.vscroll { width: 9px; height: 147px; border-radius: 5px; background: #adadad; margin-top: 3px; }
.dpane { flex: 1; }
.dpane .pane-head { margin-right: 13px; margin-left: 12px; }
.search { margin: 23px 5px 14px 6px; height: 36px; border: 1px solid #666; border-bottom-color: #aaa; border-radius: 5px; background: #242424; display: flex; align-items: center; gap: 9px; padding-left: 18px; font-size: 19px; color: #a0a0a0; }
.search svg { stroke: #aaa; stroke-width: 1.500; }
.node { height: 36px; padding-left: 25px; display: flex; align-items: center; font-size: 17px; }
.node svg + svg { margin: 0 9px 0 10px; }
.node span { letter-spacing: 0; }
```
